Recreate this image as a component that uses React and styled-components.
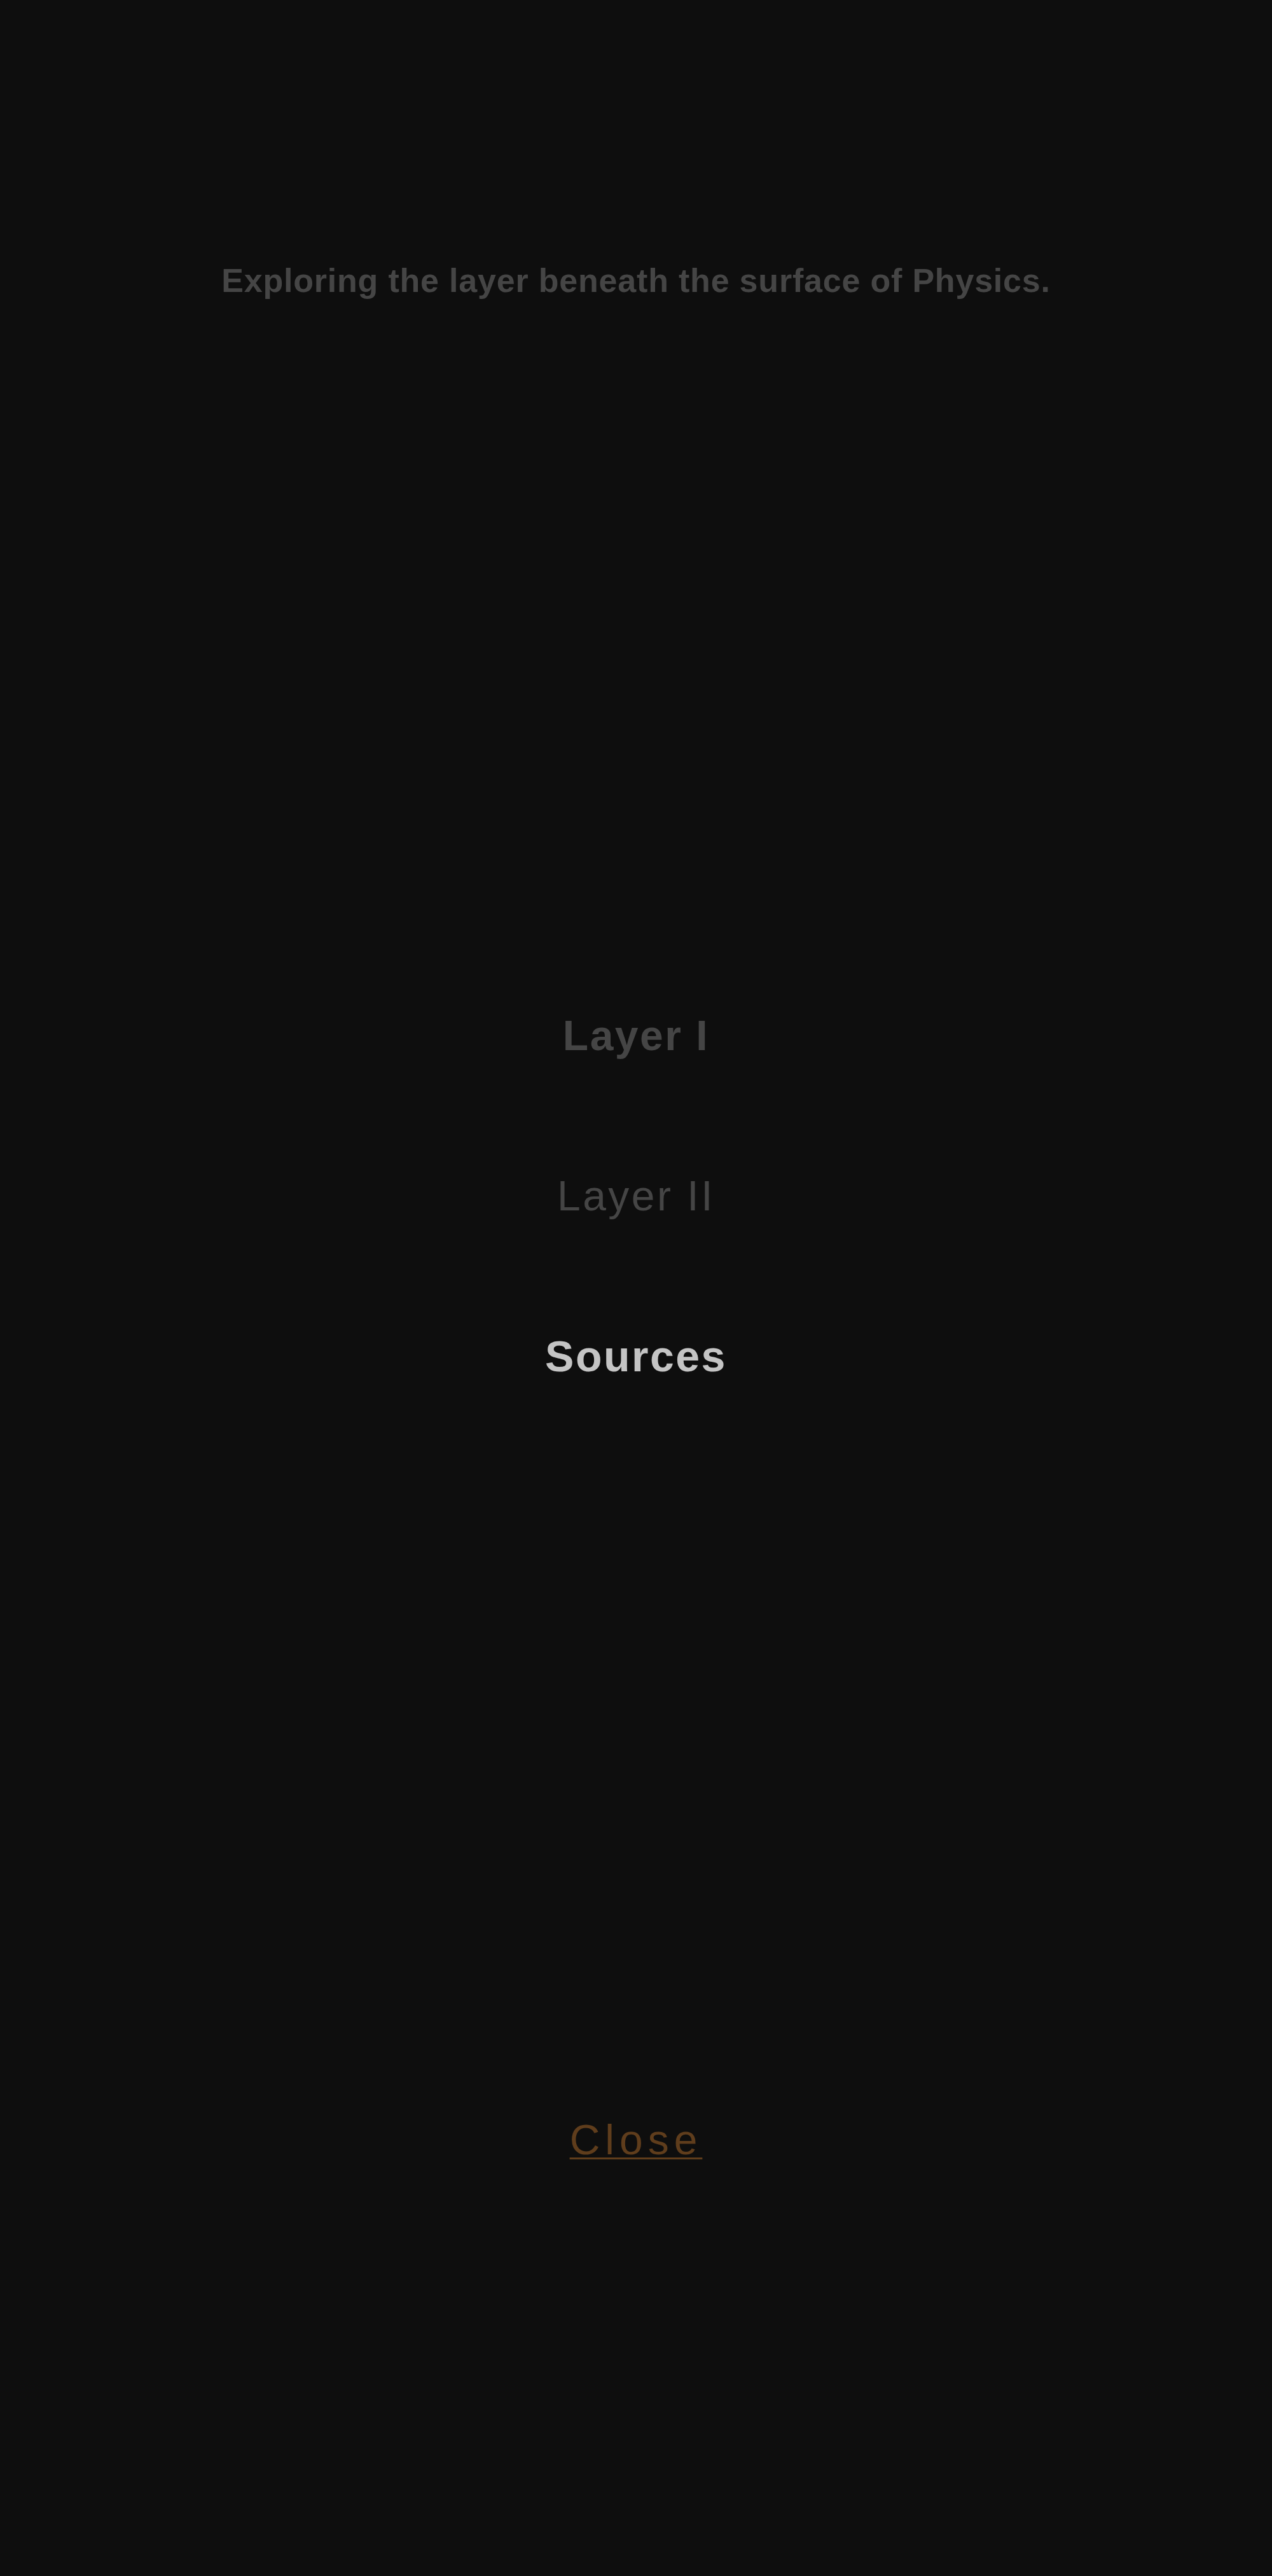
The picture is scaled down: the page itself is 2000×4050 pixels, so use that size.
import React from "react";
import styled, { createGlobalStyle } from "styled-components";

const GlobalStyle = createGlobalStyle`
  html, body {
    margin: 0;
    padding: 0;
    background-color: #0e0e0e;
  }
  * {
    box-sizing: border-box;
  }
`;

const StyledPage = styled.div`
  min-height: 4050px;
  background-color: #0e0e0e;
  display: flex;
  flex-direction: column;
  align-items: center;
  font-family: "Liberation Sans", Arial, Helvetica, sans-serif;
`;

const StyledTagline = styled.p`
  margin: 0;
  padding-top: 410px;
  font-size: 52px;
  line-height: 62px;
  font-weight: 700;
  letter-spacing: 0.8px;
  color: #454545;
  text-align: center;
`;

const StyledNav = styled.nav`
  margin-top: 1116px;
  display: flex;
  flex-direction: column;
  align-items: center;
  gap: 172px;
`;

const StyledNavLink = styled.a`
  display: block;
  font-size: ${(props) => (props.$active ? "68px" : "66px")};
  line-height: 80px;
  font-weight: ${(props) => (props.$bold ? 700 : 400)};
  letter-spacing: ${(props) => (props.$bold ? "2.5px" : "3.5px")};
  color: ${(props) => (props.$active ? "#c4c4c4" : "#454545")};
  text-decoration: none;
  text-align: center;
  cursor: pointer;
`;

const StyledClose = styled.button`
  margin-top: 1152px;
  padding: 0;
  border: none;
  background: none;
  font-family: inherit;
  font-size: 66px;
  line-height: 80px;
  font-weight: 400;
  letter-spacing: 8px;
  color: #5f3d1c;
  text-decoration: underline;
  text-decoration-thickness: 3px;
  text-underline-offset: 5px;
  cursor: pointer;
`;

const links = [
  { label: "Layer I", bold: true },
  { label: "Layer II", bold: false },
  { label: "Sources", bold: true, active: true },
];

const App = () => {
  return (
    <>
      <GlobalStyle />
      <StyledPage>
        <StyledTagline>
          Exploring the layer beneath the surface of Physics.
        </StyledTagline>
        <StyledNav>
          {links.map((link) => (
            <StyledNavLink
              key={link.label}
              $bold={link.bold}
              $active={link.active}
            >
              {link.label}
            </StyledNavLink>
          ))}
        </StyledNav>
        <StyledClose>Close</StyledClose>
      </StyledPage>
    </>
  );
};

export default App;
